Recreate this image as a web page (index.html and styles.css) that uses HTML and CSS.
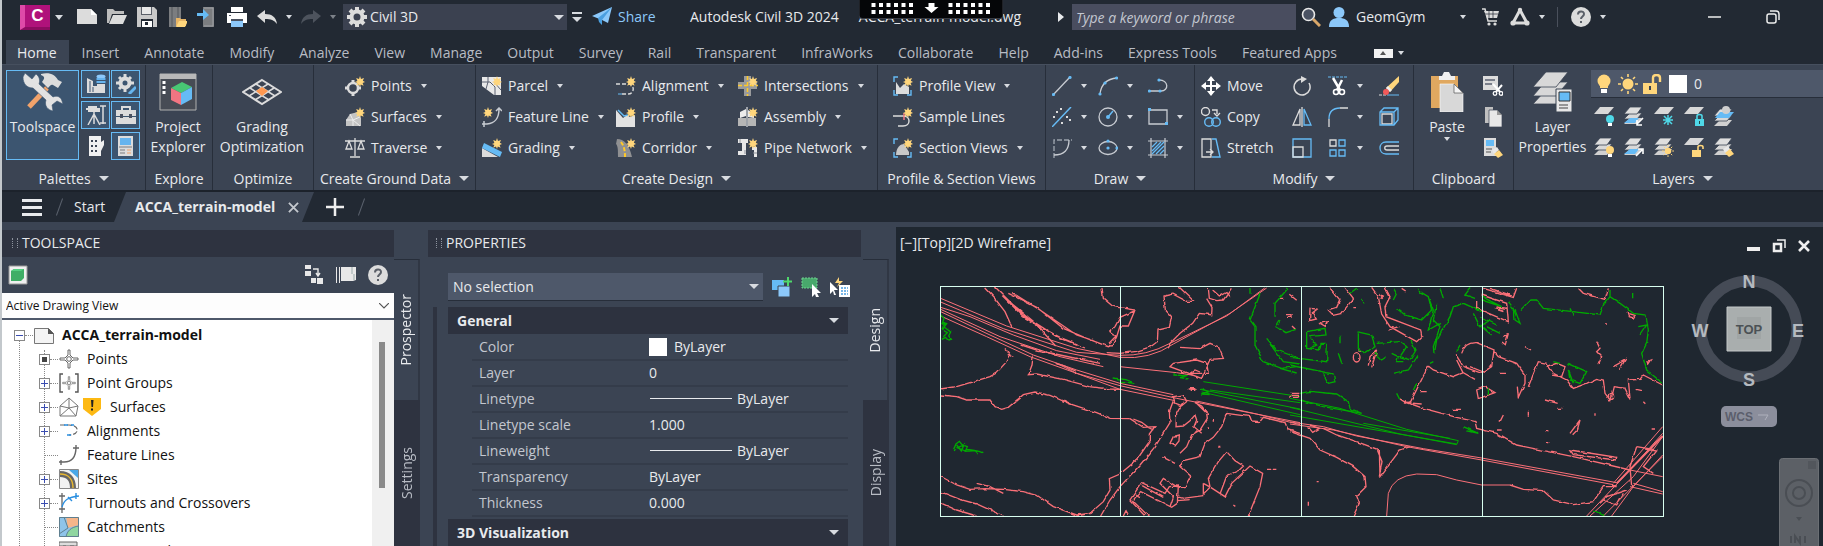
FILE: index.html
```html
<!DOCTYPE html>
<html lang="en">
<head>
<meta charset="utf-8">
<title>Autodesk Civil 3D 2024</title>
<link rel="stylesheet" href="styles.css">
</head>
<body>
<svg class="defs" aria-hidden="true">
<defs>
<symbol id="star" viewBox="0 0 20 20"><path fill="#ffd67c" d="M15 0l1 3 3-1-1.200 2.800L20 6l-2.400 1 1 2.800-2.800-1.200L15 11l-1-2.600-2.800 1.400 1.200-2.900L10 6l2.400-1L11.200 2 14 3z"/></symbol>
<symbol id="new" viewBox="0 0 20 20"><path fill="#dcdcdc" d="M0 2h14l6 6v9H0z"/><path fill="#fff" d="M14 2v6h6z"/></symbol>
<symbol id="open" viewBox="0 0 20 20"><path fill="#bdbdbd" d="M0 2h6l2 2h9v3H5L2 16H0z"/><path fill="#dcdcdc" d="M6 8h14l-4 9H2z"/></symbol>
<symbol id="save" viewBox="0 0 20 20"><path fill="#c9c9c9" d="M0 0h17l3 3v17H0z"/><path fill="#5a5f68" d="M4 0h11v8H4z"/><path fill="#e8e8e8" d="M5 0h9v7H5z"/><path fill="#222933" d="M4 12h12v8H4z"/><path fill="#fff" d="M5 14h10v6H5z"/><path fill="#222933" d="M8 15h3v3H8z"/></symbol>
<symbol id="saveweb" viewBox="0 0 20 20"><path fill="#7b7d80" d="M2 0h12v20H2z"/><path stroke="#55585d" d="M5 0v20M11 0v20"/><path fill="#e7b566" d="M9 11h4l1 1h5v7H9z"/><path fill="#ffd67c" d="M12 14h9l-3 6H9z"/></symbol>
<symbol id="export" viewBox="0 0 20 20"><path fill="#7b7d80" d="M6 0h11v20H6z"/><path stroke="#a0a2a6" fill="none" d="M7 1h9v18H7"/><path fill="#66bbf5" d="M0 6h6V2l6 6-6 5V9H0z"/></symbol>
<symbol id="print" viewBox="0 0 20 20"><path fill="#fff" d="M4 0h12v5H4zM0 6h20v10H0z"/><path fill="#4a5160" d="M2 8h2v1H2zM4 12h12v2H4z"/><path fill="#8cc8fa" d="M4 14h12v6H4z"/></symbol>
<symbol id="undo" viewBox="0 0 20 20"><path d="M0 9l8-6v4c7 0 11 3 12 10-3-4-6-5-12-5v4z"/></symbol>
<symbol id="gear" viewBox="0 0 20 20"><circle cx="10" cy="10" r="5.500" fill="none" stroke="#dcdcdc" stroke-width="4"/><path stroke="#dcdcdc" stroke-width="4" d="M10 0v4M10 16v4M0 10h4M16 10h4M3 3l3 3M14 14l3 3M3 17l3-3M14 6l3-3"/></symbol>
<symbol id="plane" viewBox="0 0 20 20"><path fill="#8cc8fa" d="M0 9L20 0l-4 16-6-3z"/><path fill="#4b9fe0" d="M6 11L20 0 10 13v5l-3-3z"/></symbol>
<symbol id="search" viewBox="0 0 20 20"><circle cx="7.500" cy="7.500" r="6" fill="#4a5263" stroke="#e8e8e8" stroke-width="1.600"/><path stroke="#d9a76a" stroke-width="3" d="M12 12l7 7"/></symbol>
<symbol id="user" viewBox="0 0 20 20"><circle cx="10" cy="5.500" r="5.500" fill="#8cc8fa"/><path fill="#8cc8fa" d="M0 20c0-7 4-9 10-9s10 2 10 9z"/></symbol>
<symbol id="cart" viewBox="0 0 20 20"><path fill="#dcdcdc" d="M4 4h15l-2 7H7z"/><path fill="none" stroke="#dcdcdc" stroke-width="1.500" d="M2 2h3l3 12h9"/><path stroke="#222933" stroke-width=".7" d="M5 7h13M9 4v7M13 4v7"/><circle cx="9" cy="17" r="1.600" fill="#dcdcdc"/><circle cx="15" cy="17" r="1.600" fill="#dcdcdc"/></symbol>
<symbol id="tri" viewBox="0 0 20 20"><path fill="none" stroke="#dcdcdc" stroke-width="3" stroke-linejoin="round" d="M10 3l7 13H3z"/><circle cx="3" cy="16" r="2.600" fill="#dcdcdc"/><circle cx="17" cy="16" r="2.600" fill="#dcdcdc"/><circle cx="10" cy="3" r="2.200" fill="#dcdcdc"/></symbol>
<symbol id="help" viewBox="0 0 20 20"><circle cx="10" cy="10" r="10" fill="#dcdcdc"/><path fill="none" stroke="#5a5f68" stroke-width="2" d="M7 7.500c0-4 6-4 6-.5 0 2.500-3 2.500-3 5"/><path fill="#5a5f68" d="M9 14h2v2H9z"/></symbol>
<symbol id="toolspace" viewBox="0 0 40 40"><path stroke="#f2a36b" stroke-width="5" d="M6 35l18-19"/><path fill="#dcdcdc" d="M18 2c9-2 14 1 17 6l4 2-4 6-5-3c-2-1-3 1-5 3l-6-6c2-3 4-5-1-7z"/><path fill="#e2e2e2" d="M2 1l7 6 4-5c4 3 4 7 3 10l14 13c4-2 8 0 9 4l1 3-6-3-5 4 1 6c-5-1-9-5-7-11L10 16C4 16 0 12 0 5z" stroke="#3c5570" stroke-width=".6"/></symbol>
<symbol id="p1" viewBox="0 0 20 20"><path fill="#dcdcdc" d="M1 4l6 3v5h4v-2h8v9H1z"/><path stroke="#3c5570" d="M4 7v11M7 13v5"/><ellipse cx="15" cy="2.500" rx="4.500" ry="2" fill="#8cc8fa"/><path fill="#66b4ee" d="M10.500 4h9v2h-9zM10.500 7h9v2h-9z"/></symbol>
<symbol id="p2" viewBox="0 0 20 20"><circle cx="9" cy="9" r="4.500" fill="none" stroke="#dcdcdc" stroke-width="4"/><path stroke="#dcdcdc" stroke-width="3" d="M9 0v4M9 14v4M0 9h4M14 9h4M3 3l3 3M3 15l3-3M12 6l3-3"/><path stroke="#66b4ee" stroke-width="3" d="M13 20l7-7"/></symbol>
<symbol id="p3" viewBox="0 0 20 20"><path fill="#dcdcdc" d="M2 1h9v2h3v4H2V5H0V3h2z"/><path stroke="#dcdcdc" stroke-width="1.500" d="M8 7v12M8 9L2 20M8 9l6 11M17 1v18M14 1h6M14 18h6"/></symbol>
<symbol id="p4" viewBox="0 0 20 20"><path fill="none" stroke="#dcdcdc" stroke-width="2" d="M6 5V2h8v3"/><path fill="#dcdcdc" d="M0 5h20v6H0zM0 12h20v7H0z"/><path fill="#4a5160" d="M4 9h3v4H4zM13 9h3v4h-3z"/></symbol>
<symbol id="p5" viewBox="0 0 20 20"><path fill="#f0f0f0" d="M3 0h12v6l3-2v5l-3 6v5H3z"/><path stroke="#3b4453" stroke-width="2" stroke-dasharray="2 3" d="M6 4v14M10 4v14"/></symbol>
<symbol id="p6" viewBox="0 0 20 20"><path fill="#dcdcdc" d="M2 0h15v20H2z"/><path fill="#66b4ee" d="M4 2h11v7H4z"/><path stroke="#7b7d80" d="M3 11h13M4 14h5M4 17h5"/><path stroke="#f2a36b" d="M11 14h4M11 17h4"/></symbol>
<symbol id="explorer" viewBox="0 0 40 40"><path fill="#474c55" stroke="#b0b0b0" d="M2 2h36v36H2z"/><path fill="#b8b8b8" d="M2 2h36v5H2z"/><path stroke="#fff" stroke-width="3" stroke-dasharray="3 2" d="M6 9v15"/><path fill="#48c774" d="M13 16l11-6 10 5-11 6z"/><path fill="#f27582" d="M13 16l10 5v12l-10-5z"/><path fill="#66bbf5" d="M23 21l11-6v12l-11 6z"/></symbol>
<symbol id="grading" viewBox="0 0 40 40"><g fill="none" stroke="#dcdcdc" stroke-width="1.500"><path stroke-width="2" d="M20 8l19 12-19 12L1 20z"/><path d="M14 12l19 12M8 16l19 12M26 12L7 24M32 16L13 28"/></g><path fill="#ff9850" d="M20 15l6 4-6 5-6-5z"/></symbol>
<symbol id="points" viewBox="0 0 20 20"><circle cx="8" cy="12" r="5" fill="none" stroke="#dcdcdc" stroke-width="2.500"/><path stroke="#dcdcdc" stroke-width="3" d="M8 4v3M8 17v3M0 12h3M13 12h3"/><use href="#star"/></symbol>
<symbol id="surf" viewBox="0 0 20 20"><path fill="#c4c4c4" d="M5 7l8-2 3 6v8H1v-6z"/><path fill="none" stroke="#eee" d="M5 7l3 6 7-3M1 13l7 0 0 6M8 13l7 6"/><use href="#star"/></symbol>
<symbol id="trav" viewBox="0 0 20 20"><g fill="none" stroke="#dcdcdc" stroke-width="1.300"><path d="M0 3h20M10 0v18M5 19h10M1 11l3-8 3 8zM13 11l3-8 3 8z"/></g></symbol>
<symbol id="parcel" viewBox="0 0 20 20"><path fill="#e8e8e8" d="M0 1h19v18h-7L0 10z"/><path fill="none" stroke="#5a6070" d="M0 6h8l5 5v8M6 1v5l-2 7M12 6l7 8"/><use href="#star"/></symbol>
<symbol id="fline" viewBox="0 0 20 20"><path fill="none" stroke="#c8ccd2" stroke-width="1.500" d="M2 14v6M0 17h5C13 16 17 12 17 2M14 4l3-3 3 3"/><use href="#star" x="-9" y="0"/></symbol>
<symbol id="grad" viewBox="0 0 20 20"><path fill="#dcdcdc" d="M0 10l16 9H0z"/><path fill="#66bbf5" d="M2 5l18 9-2 5L0 10z"/><use href="#star"/></symbol>
<symbol id="align" viewBox="0 0 20 20"><path fill="none" stroke="#dcdcdc" stroke-width="1.400" stroke-dasharray="4 2" d="M0 8h12c7 0 7 10 0 10H4"/><path stroke="#66bbf5" d="M2 18h4"/><use href="#star"/></symbol>
<symbol id="profile" viewBox="0 0 20 20"><path fill="#e2e2e2" d="M0 3l7 8 4-3 3 2 5-2v12H0z"/><path fill="none" stroke="#66bbf5" stroke-width="1.500" d="M2 3l6 6 4-1"/><use href="#star"/></symbol>
<symbol id="corridor" viewBox="0 0 20 20"><path fill="#8f9092" d="M1 1c7 0 12 5 15 18H2C2 12 2 8 0 6z"/><path fill="none" stroke="#ffc928" stroke-width="2" stroke-dasharray="4 2" d="M5 4c3 4 4 8 4 15"/><use href="#star"/></symbol>
<symbol id="inter" viewBox="0 0 20 20"><path fill="#9a9b9c" d="M6 0h7v6h6v7h-6v7H6v-7H0V6h6z"/><path stroke="#ffc928" stroke-width="1.500" stroke-dasharray="4 2" d="M9.500 0v20M0 9.500h20"/><use href="#star"/></symbol>
<symbol id="assembly" viewBox="0 0 20 20"><path fill="#b5b5b5" d="M0 11h8v8H0zM10 11h8v8h-8z"/><path fill="#ececec" d="M2 5l6-3v7l-6 2zM10 3l6 4v4l-6-1z"/><path stroke="#fff" d="M9 0v20"/><use href="#star"/></symbol>
<symbol id="pipe" viewBox="0 0 20 20"><path fill="#e8e8e8" d="M0 1h10v4H8v12H0v-4h4V5H0zM14 9h5v10h-3v-7h-2z"/><path stroke="#8d9199" d="M2 1v4M7 12v4M15 15h4"/><use href="#star"/></symbol>
<symbol id="pview" viewBox="0 0 20 20"><path fill="none" stroke="#66bbf5" stroke-width="1.400" d="M1 6V1h4M1 14v5h4M14 19h4v-5"/><path fill="#dcdcdc" d="M3 6l4 6 4-4 5 3v7H3z"/><use href="#star"/></symbol>
<symbol id="sline" viewBox="0 0 20 20"><path fill="none" stroke="#dcdcdc" stroke-width="1.400" d="M0 9h10c8 0 8 10 0 10H5"/><path stroke="#f27582" stroke-width="1.500" d="M11 6v7"/><use href="#star"/></symbol>
<symbol id="sview" viewBox="0 0 20 20"><path fill="none" stroke="#66bbf5" stroke-width="1.400" d="M1 6V1h4M1 14v5h4M14 19h4v-5"/><path fill="#c8c8c8" d="M3 17c0-8 5-11 8-11l5 8v3z"/><use href="#star"/></symbol>
<symbol id="line" viewBox="0 0 20 20"><path stroke="#c8ccd2" stroke-width="1.300" d="M1 19L18 1"/><g fill="#66bbf5"><circle cx="1.500" cy="18.500" r="1.600"/><circle cx="18" cy="1.500" r="1.600"/></g></symbol>
<symbol id="arc" viewBox="0 0 20 20"><path fill="none" stroke="#c8ccd2" stroke-width="1.300" d="M2 18C3 9 8 3 19 2"/><g fill="#66bbf5"><circle cx="2" cy="18" r="1.600"/><circle cx="7" cy="7" r="1.600"/><circle cx="18.500" cy="2" r="1.600"/></g></symbol>
<symbol id="pline" viewBox="0 0 20 20"><path fill="none" stroke="#c8ccd2" stroke-width="1.300" d="M1 15h12c8 0 8-11-2-11"/><g fill="#66bbf5"><circle cx="1.500" cy="15" r="1.600"/><circle cx="12" cy="15" r="1.600"/><circle cx="11" cy="4" r="1.600"/></g></symbol>
<symbol id="divide" viewBox="0 0 20 20"><path stroke="#66bbf5" stroke-width="1.500" d="M0 20L19 0"/><path fill="#dcdcdc" d="M4 4h2v2H4zM8 1h2v2H8zM1 9h2v2H1zM14 9h2v2h-2zM17 12h2v2h-2zM9 15h2v2H9z"/></symbol>
<symbol id="circle" viewBox="0 0 20 20"><circle cx="10" cy="10" r="9" fill="none" stroke="#c8ccd2" stroke-width="1.300"/><path stroke="#66bbf5" stroke-width="1.500" d="M10 10l5-6"/><circle cx="10" cy="10" r="2" fill="#66bbf5"/></symbol>
<symbol id="rect" viewBox="0 0 20 20"><path fill="none" stroke="#c8ccd2" stroke-width="1.300" d="M1 3h18v14H1z"/><path fill="#66bbf5" d="M0 1h3v3H0zM17 15h3v3h-3z"/></symbol>
<symbol id="fillet3" viewBox="0 0 20 20"><path fill="none" stroke="#9aa1ac" stroke-width="1.400" d="M2 20V2h18" stroke-dasharray="5 2"/><path fill="none" stroke="#c8ccd2" stroke-width="1.300" d="M17 2c0 10-5 15-15 15"/></symbol>
<symbol id="ellipse" viewBox="0 0 20 20"><ellipse cx="10" cy="10" rx="9" ry="6.500" fill="none" stroke="#c8ccd2" stroke-width="1.300"/><g fill="#66bbf5"><circle cx="10" cy="10" r="1.600"/><circle cx="10" cy="3" r="1.600"/><circle cx="19" cy="10" r="1.600"/></g></symbol>
<symbol id="hatch" viewBox="0 0 20 20"><path fill="none" stroke="#c8ccd2" stroke-width="1.200" d="M3 0v20M17 0v20M0 3h20M0 17h20"/><path stroke="#66bbf5" stroke-width="1.300" d="M4 9l5-5M4 13l9-9M4 16L16 4M8 16l8-8M12 16l4-4"/></symbol>
<symbol id="move" viewBox="0 0 20 20"><path fill="#fff" d="M10 0l4 5h-3v4h4V6l5 4-5 4v-3h-4v4h3l-4 5-4-5h3v-4H5v3l-5-4 5-4v3h4V5H6z"/></symbol>
<symbol id="copy" viewBox="0 0 20 20"><g fill="none" stroke-width="1.400"><circle cx="4.500" cy="4.500" r="4" stroke="#dcdcdc"/><path stroke="#dcdcdc" d="M11 3h5v4M13 6l3 3 3-3"/><circle cx="8" cy="15" r="4.300" stroke="#66bbf5"/><circle cx="15" cy="15" r="4.300" stroke="#66bbf5"/></g></symbol>
<symbol id="stretch" viewBox="0 0 20 20"><path fill="none" stroke="#dcdcdc" stroke-width="1.300" d="M1 1h9v18H1zM5 14h7M9 11l3 3-3 3"/><path fill="none" stroke="#66bbf5" stroke-width="1.400" d="M11 1h4l4 18h-8"/></symbol>
<symbol id="rotate" viewBox="0 0 20 20"><path fill="none" stroke="#dcdcdc" stroke-width="1.500" d="M10 3a8 8 0 1 0 7 4"/><path fill="#dcdcdc" d="M9 0l6 3-6 4z"/></symbol>
<symbol id="mirror" viewBox="0 0 20 20"><path fill="none" stroke="#dcdcdc" stroke-width="1.300" d="M8 2v16H1zM10 0v20"/><path fill="none" stroke="#66bbf5" stroke-width="1.300" d="M12 2v16h7z"/></symbol>
<symbol id="scale" viewBox="0 0 20 20"><path fill="none" stroke="#66bbf5" stroke-width="1.300" d="M1 1h18v18H1z"/><path fill="none" stroke="#dcdcdc" stroke-width="1.300" d="M1 9h10v10H1z"/></symbol>
<symbol id="trim" viewBox="0 0 20 20"><path stroke="#66bbf5" stroke-dasharray="3 1" d="M0 1h20"/><path stroke="#fff" stroke-width="2.500" d="M5 2l7 12M14 4L9 14"/><g fill="none" stroke="#fff" stroke-width="1.600"><circle cx="8" cy="16" r="2.500"/><circle cx="14" cy="16" r="2.500"/></g></symbol>
<symbol id="fillet" viewBox="0 0 20 20"><path fill="none" stroke="#dcdcdc" stroke-width="1.300" d="M1 20v-8M12 1h8"/><path fill="none" stroke="#66bbf5" stroke-width="1.300" d="M1 12C1 5 5 1 12 1"/></symbol>
<symbol id="array" viewBox="0 0 20 20"><g fill="none" stroke-width="1.300"><path stroke="#dcdcdc" d="M2 2h6v6H2z"/><path stroke="#66bbf5" d="M11 2h6v6h-6zM2 12h6v6H2zM11 12h6v6h-6z"/></g></symbol>
<symbol id="erase" viewBox="0 0 20 20"><path stroke="#66bbf5" d="M8 19h12"/><path stroke="#dcdcdc" stroke-dasharray="3 1" d="M0 19h7"/><path fill="#ffd67c" d="M20 0v6l-9 10-4-4z"/><path fill="#f0f0f0" d="M9 10l4 4-2 2-4-4z"/><circle cx="7" cy="16" r="3" fill="#f25a5a"/></symbol>
<symbol id="explode" viewBox="0 0 20 20"><path fill="none" stroke="#dcdcdc" stroke-width="1.300" d="M3 7h10v10H3z"/><path fill="none" stroke="#66bbf5" stroke-width="1.300" d="M1 5l4-4h14v12l-4 5H1zM1 5h14v13M15 5l4-4"/></symbol>
<symbol id="offset" viewBox="0 0 20 20"><path fill="none" stroke="#66bbf5" stroke-width="1.300" d="M20 4H7C-1 4-1 16 7 16h13"/><path fill="none" stroke="#dcdcdc" stroke-width="1.300" d="M20 8H8c-3 0-3 4 0 4h12"/></symbol>
<symbol id="paste" viewBox="0 0 40 40"><path fill="#e0a860" d="M4 4h27v32H4z"/><path fill="#f0f0f0" d="M12 4h3l2-4h5l2 4h4v4H12z"/><path fill="#d8d8d8" stroke="#fff" stroke-width=".6" d="M13 12h14l9 9v19H13z"/><path fill="#f4f4f4" stroke="#555" stroke-width=".7" d="M27 12v9h9z"/></symbol>
<symbol id="cut" viewBox="0 0 20 20"><path fill="#dcdcdc" d="M0 0h15v14H0z"/><path stroke="#5a6070" stroke-width="1.500" d="M2 4h10M2 8h7"/><path stroke="#fff" stroke-width="2" d="M10 8l8 9M19 9l-7 8"/><g fill="#3b4453" stroke="#fff" stroke-width="1.300"><circle cx="12" cy="17.500" r="1.800"/><circle cx="18" cy="17.500" r="1.800"/></g></symbol>
<symbol id="copyclip" viewBox="0 0 20 20"><path fill="#c0c0c0" d="M2 0h8v16H2z"/><path fill="#e8e8e8" stroke="#3b4453" stroke-width=".7" d="M6 3h8l5 5v12H6z"/><path fill="#999" d="M14 3v5h5z"/></symbol>
<symbol id="match" viewBox="0 0 20 20"><path fill="#dcdcdc" d="M1 0h12v18H1z"/><path fill="#66bbf5" d="M3 2h8v6H3z"/><path stroke="#555" d="M3 11h6M3 14h5"/><path fill="#e8e8e8" d="M9 12l5-3 2 3-5 4z"/><path fill="#ffd67c" d="M11 16l5-4 4 5-5 3z"/></symbol>
<symbol id="layerprops" viewBox="0 0 40 40"><g fill="#d8d8d8" stroke="#3b4453" stroke-width=".8"><path d="M12 19h23L23 32H0z"/><path d="M12 10h23L23 24H0z"/><path d="M13 0h22L23 15H0z"/></g><path fill="#e8e8e8" stroke="#3b4453" d="M23 17h16v23H23z"/><path fill="#66bbf5" stroke="#333" d="M26 20h11v9H26z"/><path stroke="#444" d="M26 33h9M26 36h9"/></symbol>
<symbol id="lay1" viewBox="0 0 20 20"><path fill="#d8d8d8" d="M6 1h14l-6 7H0z"/></symbol>
<symbol id="lay3" viewBox="0 0 20 20"><path fill="#d0d0d0" d="M6 12h12l-5 6H0z"/><path fill="#d8d8d8" stroke="#3b4453" stroke-width=".8" d="M6 7h12l-5 6H0z"/><path fill="#dedede" stroke="#3b4453" stroke-width=".8" d="M6 1h12l-5 7H0z"/></symbol>
<symbol id="l1" viewBox="0 0 20 20"><use href="#lay1"/><circle cx="16" cy="13" r="4" fill="#4fd8e8"/><path fill="#fff" d="M14 17h4v3h-4z"/></symbol>
<symbol id="l2" viewBox="0 0 20 20"><use href="#lay3"/><path fill="#66bbf5" d="M6 12h9l-4 5H0z"/><path stroke="#fff" stroke-width="1.600" fill="none" d="M19 12l-6 6M13 14v5h5"/></symbol>
<symbol id="l3" viewBox="0 0 20 20"><use href="#lay1"/><path stroke="#4fd8e8" stroke-width="1.500" d="M14 9v10M9 14h10M10 10l8 8M18 10l-8 8"/></symbol>
<symbol id="l4" viewBox="0 0 20 20"><use href="#lay1"/><path fill="#4fd8e8" d="M11 13h9v7h-9z"/><path fill="none" stroke="#4fd8e8" stroke-width="1.600" d="M13 13v-3c0-2 5-2 5 0v3"/><path stroke="#224444" d="M15.500 15v3"/></symbol>
<symbol id="l5" viewBox="0 0 20 20"><use href="#lay3" y="2"/><path fill="#66bbf5" d="M6 6h14l-5 6H1z"/><circle cx="12" cy="4" r="4" fill="#cfcfcf"/></symbol>
<symbol id="l6" viewBox="0 0 20 20"><use href="#lay3"/><circle cx="16" cy="13" r="4" fill="#ffd67c"/><path fill="#fff" d="M14 17h4v3h-4z"/></symbol>
<symbol id="l7" viewBox="0 0 20 20"><use href="#lay3"/><path fill="#66bbf5" d="M6 12h9l-4 5H0z"/><path stroke="#fff" stroke-width="1.600" fill="none" d="M12 19l6-6M14 12h5v5"/></symbol>
<symbol id="l8" viewBox="0 0 20 20"><use href="#lay3"/><use href="#sun" x="8" y="8" width="12" height="12"/></symbol>
<symbol id="l9" viewBox="0 0 20 20"><use href="#lay1"/><path fill="#ffd67c" d="M8 13h9v7H8z"/><path fill="none" stroke="#ffd67c" stroke-width="1.600" d="M14 13v-3c0-2 5-2 5 0v2"/></symbol>
<symbol id="l10" viewBox="0 0 20 20"><use href="#lay3"/><path fill="#e8e8e8" d="M9 12l5-3 2 3-5 4z"/><path fill="#ffd67c" d="M11 16l5-4 4 5-5 3z"/></symbol>
<symbol id="bulb" viewBox="0 0 20 20"><circle cx="10" cy="7" r="6.500" fill="#ffd67c"/><path fill="#ffd67c" d="M6 10h8v4H6z"/><path fill="#fff" d="M7 15h6v4H7z"/></symbol>
<symbol id="sun" viewBox="0 0 20 20"><circle cx="10" cy="10" r="5.500" fill="#ffd67c"/><path stroke="#ffd67c" stroke-width="1.600" d="M10 0v3M10 17v3M0 10h3M17 10h3M3 3l2 2M15 15l2 2M3 17l2-2M15 5l2-2"/></symbol>
<symbol id="unlock" viewBox="0 0 20 20"><path fill="#ffd67c" d="M1 9h14v11H1z"/><path fill="none" stroke="#ffd67c" stroke-width="2.400" d="M11 9V4c0-4 7-4 7 0v4"/><path stroke="#3b4453" stroke-width="2" d="M8 12v4"/></symbol>
<symbol id="greencube" viewBox="0 0 20 20"><path fill="#f0f0f0" stroke="#9a9a9a" d="M1 1h18v18H1z"/><path fill="#3fae66" d="M3 6l3-2h10v9l-3 3H3z"/><path fill="#55d082" d="M3 6l3-2h10l-3 2z"/></symbol>
<symbol id="ptool" viewBox="0 0 20 20"><path fill="#e8e8e8" d="M1 0h6v4H1zM1 6h6v5H1zM7 13h5v5H7zM13 13h6v6h-6z"/><path fill="none" stroke="#e8e8e8" stroke-width="1.400" d="M9 4h5v6M12 8l2 3 2-3"/></symbol>
<symbol id="panorama" viewBox="0 0 20 20"><path fill="#e8e8e8" d="M0 2h1v16H0zM3 2h1v16H3zM5 2h15v13l-3 1H5z"/><path stroke="#99aaaa" d="M16 2v7M18 9v6"/></symbol>
<symbol id="t-dwg" viewBox="0 0 20 20"><path fill="#f4f4f4" stroke="#777" d="M.5 3.500h14l5 5v10H.5z"/><path fill="#555" d="M14 3v6h6z"/></symbol>
<symbol id="t-pt" viewBox="0 0 20 20"><path fill="#fff" stroke="#666" d="M9 1h2v5l3 3h5v2h-5l-3 3v5H9v-5l-3-3H1V9h5l3-3z"/><circle cx="10" cy="10" r="2.300" fill="#fff" stroke="#666"/></symbol>
<symbol id="t-pg" viewBox="0 0 20 20"><path fill="none" stroke="#555" stroke-width="1.400" d="M4 1H1v18h3M16 1h3v18h-3"/><use href="#t-pt" x="3" y="3" width="14" height="14"/></symbol>
<symbol id="t-surf" viewBox="0 0 20 20"><path fill="#fff" stroke="#777" d="M10 1l9 8-2 10H1V9zM10 1v10l9-2M10 11L1 19M10 11l7 8M1 9l9 2"/></symbol>
<symbol id="t-warn" viewBox="0 0 20 20"><path fill="#fdb913" d="M1 1h18v11l-9 7-9-7z"/><path fill="#222" d="M9 3h2.500l-.5 7H9.500zM9 11.500h2v2H9z"/></symbol>
<symbol id="t-align" viewBox="0 0 20 20"><path fill="none" stroke="#666" stroke-width="1.200" d="M1 4h9c11 0 11 10 0 10" stroke-dasharray="5 2"/><path stroke="#2a8fe0" stroke-width="1.400" d="M5 4h4M12 4h3M8 14h4"/></symbol>
<symbol id="t-fl" viewBox="0 0 20 20"><path fill="none" stroke="#666" stroke-width="1.400" d="M2 15v5M0 17h5c8 0 12-5 12-15M14 3h6M17 0v4"/></symbol>
<symbol id="t-site" viewBox="0 0 20 20"><path fill="#f2f2f2" stroke="#888" d="M.5 .5h19v19H.5z"/><path fill="#4aa8e8" d="M10 1h9v8z"/><path fill="none" stroke="#666" stroke-width="6" d="M1 5c9 0 13 6 13 14"/><path fill="none" stroke="#e8b830" stroke-width="1.400" d="M1 5c9 0 13 6 13 14"/></symbol>
<symbol id="t-turn" viewBox="0 0 20 20"><path fill="none" stroke="#666" stroke-width="1.300" d="M3 0v20M0 3h6M0 16h6"/><path fill="none" stroke="#2a8fe0" stroke-width="1.400" d="M3 14C5 7 9 4 20 3M17 0v6M9 4l4 4"/></symbol>
<symbol id="t-catch" viewBox="0 0 20 20"><path fill="#8fc4ea" d="M0 0h20v20H0z"/><path fill="#f5b58a" d="M7 0h13v8L9 11z"/><path fill="#8fd6a0" d="M20 9v11H7c1-6 5-10 13-11z"/><path fill="none" stroke="#5f7f8f" d="M.5 .5h19v19H.5zM5 0l4 11-9 6M20 9c-8 1-12 5-13 11"/></symbol>
<symbol id="t-pipe" viewBox="0 0 20 20"><path fill="#ddd" stroke="#666" d="M0 1h18v4H0zM4 5h3v12H4zM11 5h4v8h-4z"/></symbol>
<symbol id="q1" viewBox="0 0 20 20"><path fill="#66bbf5" d="M0 3h12v10H0z"/><path fill="#8cc8fa" stroke="#3b4453" d="M6 9h12v11H6z"/><path stroke="#4fd86c" stroke-width="2" d="M16 0v9M11 4.500h9"/></symbol>
<symbol id="q2" viewBox="0 0 20 20"><path fill="#48a86c" stroke="#6fd090" stroke-dasharray="2 1" d="M1 1h15v10H1z"/><path fill="#fff" d="M11 7l9 9h-4l2 4h-3l-1-3-3 3z"/></symbol>
<symbol id="q3" viewBox="0 0 20 20"><path fill="#ffd67c" d="M9 0l-4 6h4l-2 4 6-6H9z"/><path fill="#fff" d="M0 5l8 8H4l2 5H4l-1-4-3 3zM9 8h11v12H9z"/><path stroke="#4b9fe0" stroke-width="1.500" stroke-dasharray="2 1" d="M11 11h7M11 14h7M11 17h7"/></symbol>
<filter id="rough" x="0" y="0" width="100%" height="100%" color-interpolation-filters="sRGB"><feTurbulence type="fractalNoise" baseFrequency=".14" numOctaves="2" seed="4"/><feDisplacementMap in="SourceGraphic" scale="3" xChannelSelector="R" yChannelSelector="G"/></filter>
</defs>
</svg>

<div class="app">
<header class="titlebar">
  <button class="logo" aria-label="Application menu"><span class="logo-box">C</span><i class="caret"></i></button>
  <button class="qa" aria-label="New"><svg><use href="#new"/></svg></button>
  <button class="qa" aria-label="Open"><svg><use href="#open"/></svg></button>
  <button class="qa" aria-label="Save"><svg><use href="#save"/></svg></button>
  <button class="qa" aria-label="Save as"><svg><use href="#saveweb"/></svg></button>
  <button class="qa" aria-label="Export"><svg><use href="#export"/></svg></button>
  <button class="qa" aria-label="Print"><svg><use href="#print"/></svg></button>
  <button class="qa undo" aria-label="Undo"><svg><use href="#undo"/></svg></button>
  <button class="drop" aria-label="Undo list"><i class="caret"></i></button>
  <button class="qa redo" aria-label="Redo"><svg class="flip"><use href="#undo"/></svg></button>
  <button class="drop dim" aria-label="Redo list"><i class="caret"></i></button>
  <label class="combo workspace-combo"><svg><use href="#gear"/></svg><select aria-label="Workspace"><option>Civil 3D</option></select><i class="caret wide"></i></label>
  <button class="drop custom" aria-label="Customize"><i class="bar"></i><i class="caret wide"></i></button>
  <button class="share"><svg><use href="#plane"/></svg>Share</button>
  <div class="doc-title"><span>Autodesk Civil 3D 2024</span><span>ACCA_terrain-model.dwg</span></div>
  <button class="drop" aria-label="Collapse search"><i class="play"></i></button>
  <input class="search" type="text" placeholder="Type a keyword or phrase" aria-label="Search">
  <button class="qa" aria-label="Search"><svg><use href="#search"/></svg></button>
  <button class="account"><svg><use href="#user"/></svg>GeomGym<i class="caret"></i></button>
  <button class="qa" aria-label="Store"><svg><use href="#cart"/></svg></button>
  <button class="qa" aria-label="Autodesk App"><svg><use href="#tri"/></svg></button>
  <button class="drop" aria-label="App list"><i class="caret"></i></button>
  <i class="rule"></i>
  <button class="qa" aria-label="Help"><svg><use href="#help"/></svg></button>
  <button class="drop" aria-label="Help list"><i class="caret"></i></button>
  <div class="window-buttons">
    <button aria-label="Minimize"><svg viewBox="0 0 16 16"><path stroke="#eee" stroke-width="1.500" d="M1 8h13"/></svg></button>
    <button aria-label="Restore"><svg viewBox="0 0 16 16"><g fill="none" stroke="#eee" stroke-width="1.500"><rect x="2" y="5" width="9" height="9" rx="2"/><path d="M5 2h6c2 0 3 1 3 3v6"/></g></svg></button>
  </div>
  <div class="remote-bar" aria-hidden="true"><svg viewBox="0 0 143 18"><g stroke="#fff" stroke-width="4" stroke-dasharray="4 3.500"><path d="M12 5h42M12 12h42M89 5h42M89 12h42"/></g><path fill="#fff" d="M69 3h6v4h4l-7 6-7-6h4z"/></svg></div>
</header>

<nav class="tabs">
  <button class="on">Home</button><button>Insert</button><button>Annotate</button><button>Modify</button><button>Analyze</button><button>View</button><button>Manage</button><button>Output</button><button>Survey</button><button>Rail</button><button>Transparent</button><button>InfraWorks</button><button>Collaborate</button><button>Help</button><button>Add-ins</button><button>Express Tools</button><button>Featured Apps</button>
  <button class="minimize" aria-label="Minimize ribbon"><i class="box"><i></i></i><i class="caret"></i></button>
</nav>

<section class="ribbon">
  <div class="panel palettes">
    <div class="body">
      <button class="big on"><svg><use href="#toolspace"/></svg>Toolspace</button>
      <div class="toggles">
        <button class="on" aria-label="Palette 1"><svg><use href="#p1"/></svg></button><button class="on" aria-label="Palette 2"><svg><use href="#p2"/></svg></button>
        <button class="on" aria-label="Survey"><svg><use href="#p3"/></svg></button><button class="on" aria-label="Toolbox"><svg><use href="#p4"/></svg></button>
        <button aria-label="Tool palettes"><svg><use href="#p5"/></svg></button><button class="on" aria-label="Properties"><svg><use href="#p6"/></svg></button>
      </div>
    </div>
    <h2>Palettes<i class="caret wide"></i></h2>
  </div>
  <div class="panel explore">
    <div class="body"><button class="big"><svg><use href="#explorer"/></svg>Project<br>Explorer</button></div>
    <h2>Explore</h2>
  </div>
  <div class="panel optimize">
    <div class="body"><button class="big"><svg><use href="#grading"/></svg>Grading<br>Optimization</button></div>
    <h2>Optimize</h2>
  </div>
  <div class="panel ground">
    <div class="body tools">
      <button><svg><use href="#points"/></svg>Points<i class="caret"></i></button>
      <button><svg><use href="#surf"/></svg>Surfaces<i class="caret"></i></button>
      <button><svg><use href="#trav"/></svg>Traverse<i class="caret"></i></button>
    </div>
    <h2>Create Ground Data<i class="caret wide"></i></h2>
  </div>
  <div class="panel design">
    <div class="body tools">
      <button><svg><use href="#parcel"/></svg>Parcel<i class="caret"></i></button>
      <button><svg><use href="#align"/></svg>Alignment<i class="caret"></i></button>
      <button><svg><use href="#inter"/></svg>Intersections<i class="caret"></i></button>
      <button><svg><use href="#fline"/></svg>Feature Line<i class="caret"></i></button>
      <button><svg><use href="#profile"/></svg>Profile<i class="caret"></i></button>
      <button><svg><use href="#assembly"/></svg>Assembly<i class="caret"></i></button>
      <button><svg><use href="#grad"/></svg>Grading<i class="caret"></i></button>
      <button><svg><use href="#corridor"/></svg>Corridor<i class="caret"></i></button>
      <button><svg><use href="#pipe"/></svg>Pipe Network<i class="caret"></i></button>
    </div>
    <h2>Create Design<i class="caret wide"></i></h2>
  </div>
  <div class="panel views">
    <div class="body tools">
      <button><svg><use href="#pview"/></svg>Profile View<i class="caret"></i></button>
      <button><svg><use href="#sline"/></svg>Sample Lines</button>
      <button><svg><use href="#sview"/></svg>Section Views<i class="caret"></i></button>
    </div>
    <h2>Profile &amp; Section Views</h2>
  </div>
  <div class="panel draw">
    <div class="body tools">
      <button aria-label="Line"><svg><use href="#line"/></svg><i class="caret"></i></button>
      <button aria-label="Arc"><svg><use href="#arc"/></svg><i class="caret"></i></button>
      <button aria-label="Polyline"><svg><use href="#pline"/></svg></button>
      <button aria-label="Construction line"><svg><use href="#divide"/></svg><i class="caret"></i></button>
      <button aria-label="Circle"><svg><use href="#circle"/></svg><i class="caret"></i></button>
      <button aria-label="Rectangle"><svg><use href="#rect"/></svg><i class="caret"></i></button>
      <button aria-label="Curves"><svg><use href="#fillet3"/></svg><i class="caret"></i></button>
      <button aria-label="Ellipse"><svg><use href="#ellipse"/></svg><i class="caret"></i></button>
      <button aria-label="Hatch"><svg><use href="#hatch"/></svg><i class="caret"></i></button>
    </div>
    <h2>Draw<i class="caret wide"></i></h2>
  </div>
  <div class="panel modify">
    <div class="body tools">
      <button><svg><use href="#move"/></svg>Move</button>
      <button aria-label="Rotate"><svg><use href="#rotate"/></svg></button>
      <button aria-label="Trim"><svg><use href="#trim"/></svg><i class="caret"></i></button>
      <button aria-label="Erase"><svg><use href="#erase"/></svg></button>
      <button><svg><use href="#copy"/></svg>Copy</button>
      <button aria-label="Mirror"><svg><use href="#mirror"/></svg></button>
      <button aria-label="Fillet"><svg><use href="#fillet"/></svg><i class="caret"></i></button>
      <button aria-label="Explode"><svg><use href="#explode"/></svg></button>
      <button><svg><use href="#stretch"/></svg>Stretch</button>
      <button aria-label="Scale"><svg><use href="#scale"/></svg></button>
      <button aria-label="Array"><svg><use href="#array"/></svg><i class="caret"></i></button>
      <button aria-label="Offset"><svg><use href="#offset"/></svg></button>
    </div>
    <h2>Modify<i class="caret wide"></i></h2>
  </div>
  <div class="panel clipboard">
    <div class="body">
      <button class="big"><svg><use href="#paste"/></svg>Paste<i class="caret"></i></button>
      <div class="stack">
        <button aria-label="Cut"><svg><use href="#cut"/></svg></button>
        <button aria-label="Copy clip"><svg><use href="#copyclip"/></svg></button>
        <button aria-label="Match properties"><svg><use href="#match"/></svg></button>
      </div>
    </div>
    <h2>Clipboard</h2>
  </div>
  <div class="panel layers">
    <div class="body">
      <button class="big"><svg><use href="#layerprops"/></svg>Layer<br>Properties</button>
      <div class="layer-tools">
        <label class="combo layer-combo"><svg><use href="#bulb"/></svg><svg><use href="#sun"/></svg><svg><use href="#unlock"/></svg><i class="swatch"></i><select aria-label="Current layer"><option>0</option></select></label>
        <div class="layer-grid">
          <button aria-label="Off"><svg><use href="#l1"/></svg></button><button aria-label="Isolate"><svg><use href="#l2"/></svg></button><button aria-label="Freeze"><svg><use href="#l3"/></svg></button><button aria-label="Lock"><svg><use href="#l4"/></svg></button><button aria-label="Make current"><svg><use href="#l5"/></svg></button>
          <button aria-label="On"><svg><use href="#l6"/></svg></button><button aria-label="Unisolate"><svg><use href="#l7"/></svg></button><button aria-label="Thaw"><svg><use href="#l8"/></svg></button><button aria-label="Unlock"><svg><use href="#l9"/></svg></button><button aria-label="Match layer"><svg><use href="#l10"/></svg></button>
        </div>
      </div>
    </div>
    <h2>Layers<i class="caret wide"></i></h2>
  </div>
</section>

<nav class="file-tabs">
  <button class="menu" aria-label="Menu"><i></i><i></i><i></i></button>
  <i class="slash"></i>
  <button class="start">Start</button>
  <div class="file-tab"><button>ACCA_terrain-model</button><button aria-label="Close"><svg viewBox="0 0 12 12"><path stroke="#c4c8ce" stroke-width="2" d="M1 1l10 10M11 1L1 11"/></svg></button></div>
  <button class="add" aria-label="New tab"><svg viewBox="0 0 18 18"><path stroke="#eee" stroke-width="2.500" d="M9 0v18M0 9h18"/></svg></button>
  <i class="slash"></i>
</nav>

<main class="workspace">
  <aside class="palette toolspace">
    <div class="palette-main">
      <h3>TOOLSPACE</h3>
      <div class="ts-bar">
        <button aria-label="Show model"><svg><use href="#greencube"/></svg></button>
        <button class="first-right" aria-label="Item view"><svg><use href="#ptool"/></svg></button>
        <button aria-label="Panorama"><svg><use href="#panorama"/></svg></button>
        <button aria-label="Help"><svg><use href="#help"/></svg></button>
      </div>
      <label class="view-select"><select aria-label="View"><option>Active Drawing View</option></select><svg viewBox="0 0 10 6"><path fill="none" stroke="#555" stroke-width="1.200" d="M0 0l5 5 5-5"/></svg></label>
      <div class="tree-box">
        <ul class="tree">
          <li class="root"><i class="exp minus"></i><svg><use href="#t-dwg"/></svg><b>ACCA_terrain-model</b></li>
          <li><i class="exp dot"></i><svg><use href="#t-pt"/></svg>Points</li>
          <li><i class="exp plus"></i><svg><use href="#t-pg"/></svg>Point Groups</li>
          <li><i class="exp plus"></i><svg><use href="#t-surf"/></svg><svg class="warn"><use href="#t-warn"/></svg>Surfaces</li>
          <li><i class="exp plus"></i><svg><use href="#t-align"/></svg>Alignments</li>
          <li><i class="exp none"></i><svg><use href="#t-fl"/></svg>Feature Lines</li>
          <li><i class="exp plus"></i><svg><use href="#t-site"/></svg>Sites</li>
          <li><i class="exp plus"></i><svg><use href="#t-turn"/></svg>Turnouts and Crossovers</li>
          <li><i class="exp none"></i><svg><use href="#t-catch"/></svg>Catchments</li>
          <li><i class="exp plus"></i><svg><use href="#t-pipe"/></svg>Pipe Networks</li>
        </ul>
        <div class="scroll"><i></i></div>
      </div>
    </div>
    <div class="side-tabs"><button class="on"><span>Prospector</span></button><button><span>Settings</span></button></div>
  </aside>

  <aside class="palette properties">
    <div class="palette-main">
      <h3>PROPERTIES</h3>
      <div class="prop-bar">
        <label class="combo"><select aria-label="Selection"><option>No selection</option></select><i class="caret wide"></i></label>
        <button aria-label="Toggle pickadd"><svg><use href="#q1"/></svg></button>
        <button aria-label="Select objects"><svg><use href="#q2"/></svg></button>
        <button aria-label="Quick select"><svg><use href="#q3"/></svg></button>
      </div>
      <div class="prop-list">
        <h4>General<i class="caret wide"></i></h4>
        <table>
          <tr><th>Color</th><td><i class="swatch"></i>ByLayer</td></tr>
          <tr><th>Layer</th><td>0</td></tr>
          <tr><th>Linetype</th><td><i class="ltype"></i>ByLayer</td></tr>
          <tr><th>Linetype scale</th><td>1.000</td></tr>
          <tr><th>Lineweight</th><td><i class="ltype"></i>ByLayer</td></tr>
          <tr><th>Transparency</th><td>ByLayer</td></tr>
          <tr><th>Thickness</th><td>0.000</td></tr>
        </table>
        <h4>3D Visualization<i class="caret wide"></i></h4>
      </div>
    </div>
    <div class="side-tabs"><button class="on"><span>Design</span></button><button><span>Display</span></button></div>
  </aside>

  <section class="viewport">
    <p class="view-label">[−][Top][2D Wireframe]</p>
    <svg class="drawing" aria-label="Terrain drawing">
      <svg class="west" x="-6" y="-7" viewBox="0 0 1230 978" fill="none" stroke-width="3" stroke="#fb7078">
        <path d="M152 235L350 318 560 385 690 412Q780 420 850 372L1020 280 1130 204M152 246L340 326 560 397 690 406Q770 408 840 370L1010 288 1124 204M152 262L240 290 370 345 500 392 630 418M152 268L330 350 510 410 640 440M152 275L300 345 430 405 560 450 690 490 850 524M152 288L290 350 420 410 560 460 690 497 860 535 1230 608M500 430L560 460 690 508 855 542M920 543L1100 582 1230 614M690 440L860 458 910 466"/>
        <path stroke="#00aa00" d="M940 485L1230 530M930 508L1230 567M935 516l295 68M960 510L1230 548"/>
      </svg>
      <svg class="east" x="394" y="-7" viewBox="0 0 1200 978" fill="none" stroke-width="3" stroke="#fb7078">
        <path d="M0 606L100 620 200 648 400 686 575 714 980 788M0 612L130 630 350 680 575 720 970 794M290 888L295 820Q310 768 380 762L440 764 500 780 575 795 660 795"/>
        <path d="M890 888L1020 750 1118 640M900 888L1030 770 1118 650M970 790L1118 620M940 888L1118 710M965 888L1030 800 1118 705M1020 800L1118 822M1030 790L1118 815M1020 750L1118 770"/>
        <path stroke-width="6" d="M980 790L1118 648"/>
        <path stroke="#00aa00" d="M0 535L150 565 350 628 505 662 500 674 330 642 0 562M0 585L500 672M220 610L480 655"/>
      </svg>
      <g filter="url(#rough)">
      <svg class="west" x="-6" y="-7" viewBox="0 0 1230 978" fill="none" stroke-width="4" stroke="#fb7078">
        <path d="M284 204L318 240 345 275 366 322M316 202L400 285 500 350 585 384M335 225L400 290 440 315 497 378M340 230L450 320 510 352 560 372M355 220L440 262 520 325 590 355 655 380 668 375M366 218L450 270 560 345 610 362M636 204L640 235 670 260 735 270 715 318 690 318 680 350 665 380M735 272L690 292 675 320 660 335 678 348 655 372"/>
        <path d="M868 202L912 244 890 244 848 222 822 228 826 270 845 290 838 322 804 330 802 365 782 380 740 394 690 400 650 398M955 204L958 235 980 242 1000 240 1024 205M968 210l20 18 20-10 12 14M950 236L966 262 965 284 928 280 908 310 870 340 840 370 835 385M870 382L930 386 960 370 985 380 1000 415 960 418 935 475 840 440 850 430 920 420 950 430 955 460 900 460 915 450 930 456"/>
        <path d="M345 385L360 405 345 430 318 460 300 470 200 500 150 507M350 402l20 10M395 375L440 390 510 405 630 430M430 405L426 435 415 464 440 462 520 478 600 500 660 507 690 508M500 430L555 452 553 462"/>
        <path d="M150 525L200 530 230 540 300 540 315 560 335 568 355 562 400 524 435 516 480 526 540 552 620 578 660 595 720 596 760 622 794 620 778 642 778 665 740 720 690 762 658 776 660 810 640 845 600 880 560 888M790 630l-15-8-20-15-25-10M520 540l30 15M850 542L838 575 840 608 795 680 750 735 690 800 660 840 632 888"/>
        <path d="M150 768L200 795 240 808 285 806 340 808 400 815 440 825 490 860 560 885 600 880M260 790L300 800 340 820M150 815L210 838 260 852 340 888M150 848L200 870 260 888"/>
        <path d="M850 530l30-5 10 20-15 12-20-8zM880 545L860 580 858 620 880 618 900 602 915 585 920 600 912 620 935 640M915 545L950 580 952 595 930 630 905 645 890 680 870 700M868 645l-18 5-10 20 15 8 12-15zM820 712l35 18M950 578l-15-20-20-10M1010 580L995 620 970 652 945 670 930 710 880 722 870 740 902 768 885 800 860 800 820 775 810 790 850 830 840 860M1010 580L1080 590 1085 603 1110 605 1120 592 1185 608 1195 630 1230 640M955 580v5m15 15v5m-15 17v5m30 55h6m140 66h28"/>
        <path d="M755 788L825 820 838 800 865 798 862 850 845 862 752 815 728 842 775 888M755 788L720 840 765 888M755 796L820 832M735 825l15 8M860 830l20 5 60-8M862 842l40-3M700 888l8-16 6 10M940 790L962 802 1005 830 1025 790 1080 738 1118 760 1110 800 1075 888M960 800L955 775 985 725 1010 695 1035 722 1060 738 1048 750 1010 768 990 822M940 790v32l20-20M1030 855l6 4"/>
        <path d="M900 503h16m-20 4h24m-18 4h14" stroke-width="4"/>
        <path d="M1170 235h10m18-12l22 18M1188 284h15v8h-12M1206 318l10 10M1200 520h28m-30 12h28M1205 526h22"/>
        <g stroke="#00aa00"><path d="M152 285l10 10-4 12 12 4-8 10 20 15-6 12 8 10-10 2-8-8-10 6M154 310l12 4-8 16 14 8-12 12M190 690l8-18 10-8 8 10 16 6-6 14 30-2 10 10M200 675l14 18 8-18-20 8 24 10M230 688l40 6 10 4M850 465l40 2-20 6 26 4M668 474l40 5 25 10-40-2M935 506l20 10-18 6 22 2M1080 204v20M1110 222L1080 300 1095 320 1095 375 1120 425 1175 445 1220 440M1195 204L1155 250 1155 290M1130 355L1160 390 1230 416M1140 372L1180 425 1230 432M1170 300l-12 20 30 18 30-10M1170 445l50 14"/></g>
      </svg>
      <svg class="east" x="394" y="-7" viewBox="0 0 1200 978" fill="none" stroke-width="4" stroke="#fb7078">
        <path d="M0 635L60 655 90 690 140 712 190 740 225 770 228 800 200 828 208 850 190 888M60 615l28 10-20 12-12-15M100 625L140 645 200 665 268 690 270 770 330 690 360 680M262 690l14 35-8 45M660 795L700 808 760 812 790 840 850 854 910 845 940 800 980 800"/>
        <path d="M120 204L150 240 140 262 115 270 130 286 155 280 190 235 165 202M245 202L265 230 275 282 300 320 380 365 395 350 392 330 288 290 285 260 300 230 285 202M268 220l12 8-8 8M295 330l30-10M60 265l22 2-15 12 12 18-20 5zM90 310l22-5-6 14zM335 205l12 8M190 412a10 14 0 1 0 20 0 10 14 0 1 0-20 0M235 440l5-30 20-18-15 50M190 263h8M205 390h6"/>
        <path d="M415 438L362 545 345 550 330 540 400 565 500 592 555 605 560 625 620 640 680 675 860 712 1020 750M415 438L430 450 490 470 520 458 555 478M345 548l50 4M515 400Q525 365 560 368L612 390 605 440 575 460 520 440 495 400M500 420l20 40M540 440l40 16M612 395L625 410 680 430 705 465 705 490 685 535 682 500M560 510l25-10 30 18-50 18zM390 515h20M488 568h25M630 460h15M640 585l-10 20M620 630h15M715 575v12M765 540l35 10M805 565h15M770 635h8M770 668h8M915 580v10"/>
        <path d="M580 205L670 232 680 205M575 225L650 250 655 305 560 265 560 240M600 205l60 20M610 265l30 10-20-14 30 4M640 350l14-6-8 30-10-8M705 380l18 10M715 500L745 425 770 430 790 460 830 480 850 505 890 490 920 475 940 480 945 520 960 540 970 500 1005 505 1020 535 1015 480 1050 478 1060 465 1118 495M770 440l30-10 25 10-10 30-30-5M955 530a8 8 0 1 0 16 0 8 8 0 1 0-16 0M1040 508l16 4M1060 545l6 6M865 205L880 220 945 238 955 205M970 440l35-20-15 26M920 365l10 20-10 10 15 15-8 20M1070 425l14-5-8 12-6-8M945 312h6M1015 280l20 6-5 8-12-4zM840 640l30-40-8 30-14 14M840 690L980 712 978 720 850 704zM80 785h6M55 845v12M1085 630h10"/>
        <path d="M1040 680L1020 740 1025 800M940 840L980 855 1000 820M1040 680L1100 690 1060 740 1090 760M930 850L950 830 1010 810"/>
        <g stroke="#00aa00"><path d="M30 520L60 514 140 522 175 545 180 565 215 580 100 560 30 540M0 412L110 425 112 370 90 370 85 390 50 385 50 335 105 325 108 345 60 350 80 375 60 385M0 435L130 462 135 485 115 490 100 460M145 400l12 35M150 350v20"/><path d="M310 240L320 220 310 205M320 265L345 285 395 300 425 270 415 230 390 215 385 204M415 232L430 270 415 330 450 310M440 250L430 300 450 320 430 380 432 400M435 390L440 360 480 290 490 260 520 250 575 275M450 205l10 30M200 335L245 345 255 380 225 400 205 385 205 340M260 370l70-5 20 15-20 30 30 10 18-30-15-30M255 400l20 20 15-10M310 460L355 450 385 405M305 400l20 10-5 15 20 0M420 430l10-5M540 205l-15 20 30 10M550 280l20 40 30-20M590 320l40 20M570 290l50 25M320 520l10 20M520 620l45 20-35-8M595 505v20M380 490l-10 20M510 375l-10 18"/><path d="M655 245L675 270 690 310 675 300 672 260M690 272L720 240 740 240 760 265 850 275 930 285 940 255 960 230 990 250 1030 280 1068 285 1075 330 1070 370 1055 400 1070 450 1118 490M1045 320l25-5-20 30M960 210v20M1028 220v15M835 430L890 455 870 490 840 480 835 450 850 490M790 425l20 5M910 870l30 16M575 240l60 20-60-30M575 320l30 25M840 265l10 20M200 205l-20 15M215 240l8 10"/></g>
      </svg>
      </g>
      <path fill="none" stroke="#d8fff0" stroke-width="1" shape-rendering="crispEdges" d="M44 59h723v230H44zM224 59v230M405 59v230M586 59v230"/>
    </svg>
    <div class="doc-buttons">
      <button aria-label="Minimize"><svg viewBox="0 0 14 14"><path fill="#eee" d="M0 8h13v4H0z"/></svg></button>
      <button aria-label="Restore"><svg viewBox="0 0 14 14"><path fill="none" stroke="#eee" stroke-width="2.500" d="M2 5h7v7H2z"/><path fill="none" stroke="#eee" stroke-width="1.500" d="M5 1h8v8"/></svg></button>
      <button aria-label="Close"><svg viewBox="0 0 14 14"><path stroke="#eee" stroke-width="2.600" d="M2 2l10 10M12 2L2 12"/></svg></button>
    </div>
    <svg class="cube" viewBox="0 0 116 124" aria-label="View cube">
      <circle cx="58" cy="58" r="48" fill="none" stroke="#454b56" stroke-width="11"/>
      <path fill="#a9aeae" stroke="#c3c7c7" d="M36 36h44v44H36z"/><path fill="#a0a5a5" d="M46 46h24v22H46z"/>
      <g text-anchor="middle"><text class="face" x="58" y="63">TOP</text><text x="58" y="17">N</text><text x="58" y="115">S</text><text x="9" y="66">W</text><text x="107" y="66">E</text></g>
    </svg>
    <button class="wcs">WCS<svg viewBox="0 0 12 8"><path fill="none" stroke="#aeb0bc" d="M1 2h10L8 7"/></svg></button>
    <svg class="navbar" viewBox="0 0 40 120" aria-hidden="true"><rect x=".5" y=".5" width="39" height="130" rx="3" fill="#5c6066" stroke="#6b6f74"/><path fill="#52565c" d="M29 3h8v8h-8z"/><g fill="none" stroke="#4a4e54" stroke-width="2"><circle cx="20" cy="35" r="13"/><circle cx="20" cy="35" r="6"/><path d="M12 85v-7M16 85v-7l5 7v-7M26 85v-7"/></g><path fill="#4a4e54" d="M17 59h6l-3 4z"/></svg>
  </section>
</main>
</div>
</body>
</html>
```
FILE: styles.css
```css
* { box-sizing: border-box; }

body {
  margin: 0;
  font: 14px/20px "Open Sans", "Noto Sans", sans-serif;
  color: #e8eaed;
  background: #222933;
}

button, select, input {
  font: inherit;
  color: inherit;
  background: none;
  border: 0;
  padding: 0;
  margin: 0;
}

button { white-space: nowrap; }
select { appearance: none; outline: 0; }
h2, h3, h4, p, ul { margin: 0; padding: 0; font-weight: 400; font-size: 14px; }
svg { width: 20px; height: 20px; flex: none; }
.defs { position: absolute; width: 0; height: 0; }

.app {
  height: 100vh;
  display: flex;
  flex-direction: column;
  overflow: hidden;
  border-left: 2px solid #c3c8cc;
}

.caret {
  flex: none;
  border: 3px solid transparent;
  border-top: 4px solid #d8dbe0;
  border-bottom: 0;
}
.caret.wide { border-width: 5px 5px 0; }

/* Title bar */
.titlebar {
  position: relative;
  display: flex;
  align-items: center;
  height: 40px;
  padding: 0 21px 6px 18px;
  flex: none;
}
.logo { display: flex; align-items: center; width: 52px; gap: 5px; }
.logo .caret { border-width: 5px 4px 0; }
.logo-box {
  width: 30px;
  height: 25px;
  background: #b0127b;
  border-left: 5px solid #de4aa8;
  border-bottom: 3px solid #8b0c60;
  font: bold 17px/21px "Liberation Sans", sans-serif;
  color: #fff;
}
.qa { width: 30px; height: 26px; display: flex; align-items: center; justify-content: center; flex: none; }
.undo { fill: #dcdcdc; }
.redo { fill: #4d535d; }
.flip { transform: scaleX(-1); }
.drop { width: 14px; height: 26px; display: flex; flex-direction: column; align-items: center; justify-content: center; gap: 3px; flex: none; }
.dim { opacity: 0.5; }
.combo { display: flex; align-items: center; background: #3b4150; }
.combo select { flex: 1; min-width: 0; }
.workspace-combo { width: 224px; height: 26px; margin-left: 3px; padding: 0 3px 0 4px; gap: 3px; }
.custom { margin: 0 8px 0 3px; }
.custom .bar { width: 10px; height: 2px; background: #d8dbe0; }
.share { display: flex; align-items: center; gap: 6px; width: 98px; color: #8cc8fa; flex: none; }
.doc-title { display: flex; gap: 20px; width: 364px; white-space: nowrap; }
.play { border: 5px solid transparent; border-left: 6px solid #e8eaed; border-right: 0; }
.search {
  width: 224px;
  height: 26px;
  margin-left: 4px;
  padding: 0 4px;
  background: #494d5f;
}
.search::placeholder { font-style: italic; color: #c3c7d0; }
.account { display: flex; align-items: center; gap: 7px; width: 149px; padding-left: 3px; }
.account .caret { margin: 0 9px 0 auto; }
.rule { width: 1px; height: 20px; margin: 0 8px; background: #4a505c; }
.window-buttons { display: flex; margin-left: auto; }
.window-buttons button { width: 58px; height: 26px; display: flex; align-items: center; justify-content: center; }
.window-buttons svg { width: 16px; height: 16px; }
.remote-bar {
  position: absolute;
  top: 0;
  left: 51%;
  transform: translateX(-50%);
  background: #050608;
  border: 1px solid #3a3d44;
  border-top: 0;
  border-radius: 0 0 4px 4px;
}
.remote-bar svg { display: block; width: 143px; height: 18px; }

/* Ribbon tabs */
.tabs { display: flex; height: 24px; padding-left: 4px; flex: none; color: #b8bcc4; }
.tabs button { padding: 2px 12px 0 13px; line-height: 22px; }
.tabs .on { background: #3b4453; color: #e8eaed; padding: 2px 12px 0 11px; }
.tabs .minimize { display: flex; align-items: center; gap: 5px; margin-left: 12px; }
.box { display: flex; align-items: center; justify-content: center; width: 19px; height: 9px; background: #f2f2f2; }
.box i { border: 3px solid transparent; border-bottom: 4px solid #555; border-top: 0; }

/* Ribbon */
.ribbon { display: flex; height: 126px; background: #3b4453; border-top: 1px solid #464f5e; flex: none; }
.panel { display: flex; flex-direction: column; flex: none; border-right: 1px solid #272e3a; }
.panel h2 { display: flex; align-items: center; justify-content: center; gap: 8px; height: 25px; padding-top: 2px; white-space: nowrap; }
.body { height: 100px; padding-top: 5px; display: flex; }
.big { display: flex; flex-direction: column; align-items: center; width: 100%; padding-top: 2px; }
.big svg { width: 40px; height: 40px; margin-bottom: 5px; }
.tools { display: grid; grid-auto-rows: 31px; padding-left: 6px; }
.tools button { display: flex; align-items: center; gap: 6px; }
.tools .caret { margin-left: 3px; }
.palettes { width: 144px; }
.palettes .body { padding-left: 4px; gap: 2px; }
.palettes .big { width: 73px; height: 90px; padding-top: 1px; }
.palettes .big.on, .toggles .on { background: #3c5570; border: 1px solid #66bbf5; }
.toggles { display: grid; grid-template-columns: 29px 29px; grid-auto-rows: 28px; gap: 3px 1px; }
.toggles button { display: flex; align-items: center; justify-content: center; }
.explore { width: 67px; }
.explore .big, .optimize .big { padding-right: 2px; }
.optimize { width: 101px; }
.ground { width: 162px; }
.ground .tools { padding-left: 31px; }
.design { width: 402px; }
.design .tools { grid-template-columns: 134px 122px 1fr; }
.views { width: 168px; }
.views .tools { padding-left: 15px; }
.draw { width: 149px; }
.draw .tools { grid-template-columns: 46px 50px 1fr; }
.modify { width: 219px; }
.modify .tools { grid-template-columns: 91px 36px 51px 1fr; }
.clipboard { width: 100px; }
.clipboard .big { width: 66px; }
.stack { display: grid; grid-auto-rows: 31px; align-items: center; padding-left: 3px; }
.stack button, .layer-grid button { display: flex; }
.layers { flex: 1; border-right: 0; }
.layers h2 { padding-left: 28px; }
.layers .big { width: 77px; }
.layer-tools { flex: 1; }
.layer-combo { height: 28px; padding-left: 3px; gap: 4px; background: #4e586a; border-bottom: 1px solid #272e3a; }
.swatch { width: 18px; height: 18px; background: #fff; }
.layer-combo .swatch { margin: 0 3px; }
.layer-grid { display: grid; grid-template-columns: repeat(5, 30px); grid-auto-rows: 31px; align-items: center; padding: 2px 0 0 3px; }

/* File tabs */
.file-tabs { display: flex; align-items: center; height: 32px; background: #222933; border-top: 2px solid #1c222b; flex: none; padding-left: 20px; }
.menu { display: grid; gap: 4px; width: 20px; }
.menu i { height: 3px; background: #e8eaed; }
.slash { width: 1px; height: 18px; margin: 0 14px 0 17px; background: #59606c; transform: rotate(20deg); }
.start { width: 40px; text-align: left; }
.file-tab {
  display: flex;
  align-items: center;
  align-self: stretch;
  gap: 13px;
  width: 200px;
  padding-left: 21px;
  background: #3b4453;
  clip-path: polygon(12px 0, 100% 0, 188px 100%, 0 100%);
  font-weight: 700;
}
.file-tab svg { display: block; width: 11px; height: 11px; }
.add { display: flex; margin-left: 12px; }
.add svg { width: 18px; height: 18px; }

/* Palettes */
.workspace { display: flex; flex: 1; min-height: 0; background: #3b4453; }
.palette { display: flex; flex: none; padding-top: 8px; }
.palette-main { display: flex; flex-direction: column; min-height: 0; }
.palette h3 { height: 27px; padding-left: 20px; line-height: 26px; background: #2e3340; flex: none; }
.palette h3::before {
  content: "";
  float: left;
  width: 4px;
  height: 10px;
  margin: 8px 0 0 -10px;
  border: 1px dotted #8d939e;
  border-width: 0 1px;
}
.side-tabs { display: flex; flex-direction: column; width: 26px; padding-top: 29px; }
.side-tabs button { flex: 1; display: flex; align-items: center; justify-content: center; background: #2e3340; color: #b8bcc4; }
.side-tabs .on { flex: 0 0 141px; background: #3b4453; color: #e8eaed; border-top: 1px solid #272e3a; border-right: 2px solid #303744; }
.side-tabs span { writing-mode: vertical-rl; transform: rotate(180deg); }

.toolspace { width: 426px; }
.toolspace .palette-main { width: 392px; }
.ts-bar { display: flex; align-items: center; gap: 12px; height: 36px; padding: 0 6px; flex: none; }
.ts-bar button { display: flex; }
.first-right { margin-left: auto; }
.view-select { display: flex; align-items: center; height: 27px; padding: 0 5px 0 4px; background: #fdfdfd; border-bottom: 2px solid #4e586a; color: #111; font-size: 12px; flex: none; }
.view-select select { flex: 1; }
.view-select svg { width: 10px; height: 6px; }
.tree-box { display: flex; flex: 1; min-height: 0; background: #fff; color: #111; overflow: hidden; }
.tree {
  position: relative;
  flex: 1;
  list-style: none;
  padding-top: 3px;
}
.tree::before, .tree::after { content: ""; position: absolute; top: 18px; bottom: 0; left: 17px; border-left: 1px dotted #888; }
.tree::after { top: 30px; left: 42px; }
.tree li { display: flex; align-items: center; height: 24px; padding-left: 37px; }
.tree li.root { padding-left: 12px; }
.tree svg { margin-right: 8px; }
.tree li > .warn { margin: 0 8px 0 -5px; }
.exp { position: relative; z-index: 1; width: 11px; height: 11px; margin-right: 9px; border: 1px solid #888; background: #fff; }
.exp::before { content: ""; position: absolute; top: 4px; left: 10px; width: 8px; border-top: 1px dotted #888; }
.exp.none { border-color: transparent; background: none; }
.exp.none::before { left: 5px; width: 13px; }
.exp.plus, .exp.minus { background: linear-gradient(#3a4db0, #3a4db0) 50% / 7px 1px no-repeat #fff; }
.exp.plus { background: linear-gradient(#3a4db0, #3a4db0) 50% / 7px 1px no-repeat, linear-gradient(#3a4db0, #3a4db0) 50% / 1px 7px no-repeat #fff; }
.exp.dot { background: linear-gradient(#444, #444) 50% / 5px 5px no-repeat #fff; }
.scroll { width: 22px; padding: 22px 0 0 7px; background: #f0f0f0; }
.scroll i { display: block; width: 6px; height: 146px; background: #8a8a8a; }

.properties { width: 468px; }
.properties .palette-main { width: 435px; }
.properties h3 { margin-right: 2px; padding-left: 18px; }
.prop-bar { display: flex; align-items: center; gap: 9px; padding: 16px 13px 6px 20px; }
.prop-bar .combo { flex: 1; height: 28px; padding: 0 4px 0 5px; background: #4e586a; border-bottom: 1px solid #272e3a; }
.prop-bar button { display: flex; }
.prop-list { flex: 1; min-height: 0; margin: 0 15px 0 5px; padding-left: 11px; border-left: 4px solid #2e3340; overflow: hidden; }
.prop-list h4 { display: flex; align-items: center; justify-content: space-between; height: 27px; padding: 0 9px; background: #2d323f; font-weight: 700; }
.prop-list table { width: 376px; margin: 0 0 2px 24px; border-collapse: collapse; }
.prop-list th, .prop-list td { height: 26px; padding: 0; font-weight: 400; text-align: left; border-bottom: 2px solid #343c4a; }
.prop-list th { width: 177px; padding-left: 7px; color: #c3c7cf; }
.prop-list td .swatch { display: inline-block; vertical-align: middle; margin: -1px 7px 0 0; }
.ltype { display: inline-block; width: 82px; margin: 0 5px 5px 1px; border-top: 1px solid #e8eaed; }

/* Drawing area */
.viewport { position: relative; flex: 1; min-width: 0; margin-top: 5px; background: #1f2730; overflow: hidden; }
.view-label { padding: 6px 4px; }
.drawing { position: absolute; inset: 0; width: 100%; height: 100%; }
.drawing .west { width: 410px; height: 326px; }
.drawing .east { width: 400px; height: 326px; }
.doc-buttons { position: absolute; top: 12px; right: 12px; display: flex; gap: 11px; }
.doc-buttons svg { display: block; width: 14px; height: 14px; }
.cube { position: absolute; top: 44px; right: 16px; width: 116px; height: 124px; fill: #b4b9bf; font: bold 18px "Liberation Sans", sans-serif; }
.cube .face { fill: #4b5155; font-size: 13px; }
.wcs { position: absolute; top: 179px; right: 46px; display: flex; align-items: center; gap: 4px; width: 56px; height: 21px; padding-left: 4px; border-radius: 5px; background: #8b8e9c; color: #5b5e6c; font: bold 12px "Liberation Sans", sans-serif; }
.wcs svg { width: 12px; height: 8px; }
.navbar { position: absolute; top: 231px; right: 4px; width: 40px; height: 120px; }
```
